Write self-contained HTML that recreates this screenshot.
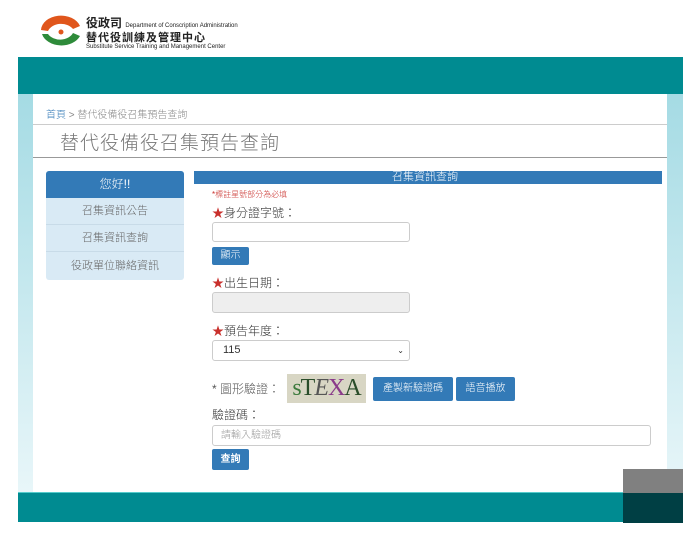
<!DOCTYPE html>
<html><head><meta charset="utf-8"><style>
*{margin:0;padding:0;box-sizing:border-box}
body{width:693px;height:534px;background:#fff;position:relative;overflow:hidden;font-family:"Liberation Sans","Noto Sans CJK TC",sans-serif;color:#333;font-weight:300}
.a{position:absolute}
.btn{position:absolute;background:#337ab7;color:#fff;border-radius:2px;font-size:10px;text-align:center}
.star{color:#c9302c}
</style></head><body>
<div class="a" style="left:38px;top:12px;width:46px;height:40px">
<svg width="46" height="40" viewBox="0 0 46 40"><path d="M3 18 A20 15 0 0 1 42 14 L35 17 A14 11 0 0 0 10 19 Z" fill="#e0561c"/><path d="M4 22 A20 15 0 0 0 42 24 L35 21 A14 11 0 0 1 10 22 Z" fill="#2e8b3a"/><circle cx="23" cy="20" r="6" fill="#fff"/><circle cx="23" cy="20" r="2.5" fill="#e0561c"/></svg></div>
<div class="a" style="left:86px;top:14px;font-size:12px;font-weight:bold;color:#222;white-space:nowrap">役政司 <span style="font-size:6px;font-weight:normal">Department of Conscription Administration</span></div>
<div class="a" style="left:86px;top:29px;font-size:11px;font-weight:bold;color:#222;letter-spacing:1px">替代役訓練及管理中心</div>
<div class="a" style="left:86px;top:44px;font-size:6px;color:#222">Substitute Service Training and Management Center</div>
<div class="a" style="left:18px;top:57px;width:665px;height:37px;background:#008b91"></div>
<div class="a" style="left:18px;top:94px;width:15px;height:398px;background:linear-gradient(#a5dbe4,#e8f6f9)"></div>
<div class="a" style="left:667px;top:94px;width:16px;height:398px;background:linear-gradient(#a5dbe4,#e8f6f9)"></div>
<div class="a" style="left:46px;top:106px;font-size:10px;color:#888"><span style="color:#337ab7">首頁</span> &gt; 替代役備役召集預告查詢</div>
<div class="a" style="left:33px;top:124px;width:634px;height:1px;background:#ccc"></div>
<div class="a" style="left:60px;top:128px;font-size:19px;color:#777;letter-spacing:1px;font-weight:200">替代役備役召集預告查詢</div>
<div class="a" style="left:33px;top:157px;width:634px;height:1px;background:#999"></div>
<div class="a" style="left:46px;top:171px;width:138px;height:109px;background:#d9eaf5;border-radius:3px"></div>
<div class="a" style="left:46px;top:171px;width:138px;height:27px;background:#337ab7;color:#fff;font-size:12px;text-align:center;line-height:27px;border-radius:3px 3px 0 0">您好!!</div>
<div class="a" style="left:46px;top:198px;width:138px;height:27px;color:#666;font-size:11px;text-align:center;line-height:27px;border-bottom:1px solid #c8dbe8">召集資訊公告</div>
<div class="a" style="left:46px;top:225px;width:138px;height:27px;color:#666;font-size:11px;text-align:center;line-height:27px;border-bottom:1px solid #c8dbe8">召集資訊查詢</div>
<div class="a" style="left:46px;top:252px;width:138px;height:28px;color:#666;font-size:11px;text-align:center;line-height:28px">役政單位聯絡資訊</div>
<div class="a" style="left:194px;top:171px;width:468px;height:13px;background:#337ab7;color:#fff;font-size:11px;line-height:13px;padding-left:198px;white-space:nowrap">召集資訊查詢</div>
<div class="a" style="left:212px;top:189px;font-size:8px;color:#c9302c">*標註星號部分為必填</div>
<div class="a" style="left:212px;top:204px;font-size:12px"><span class="star">★</span>身分證字號：</div>
<div class="a" style="left:212px;top:222px;width:198px;height:20px;border:1px solid #ccc;border-radius:3px"></div>
<div class="btn" style="left:212px;top:247px;width:37px;height:18px;line-height:18px">顯示</div>
<div class="a" style="left:212px;top:274px;font-size:12px"><span class="star">★</span>出生日期：</div>
<div class="a" style="left:212px;top:292px;width:198px;height:21px;border:1px solid #ccc;border-radius:3px;background:#eee"></div>
<div class="a" style="left:212px;top:322px;font-size:12px"><span class="star">★</span>預告年度：</div>
<div class="a" style="left:212px;top:340px;width:198px;height:21px;border:1px solid #ccc;border-radius:3px;font-size:11px;line-height:19px;padding-left:10px">115<span style="position:absolute;right:5px;font-size:8px">⌄</span></div>
<div class="a" style="left:212px;top:380px;font-size:12px;color:#555">* 圖形驗證：</div>
<div class="a" style="left:287px;top:374px;width:79px;height:29px;background:#d8d6c4;font-size:24px;font-family:'Liberation Serif',serif;color:#3c7a3c;line-height:29px;text-align:center;letter-spacing:-1px">s<span style="color:#2a4d2a">T</span><i style="color:#555">E</i><span style="color:#8a3b8a">X</span><span style="color:#2a4d2a">A</span></div>
<div class="btn" style="left:373px;top:377px;width:80px;height:24px;line-height:24px">產製新驗證碼</div>
<div class="btn" style="left:456px;top:377px;width:59px;height:24px;line-height:24px">語音播放</div>
<div class="a" style="left:212px;top:406px;font-size:12px">驗證碼：</div>
<div class="a" style="left:212px;top:425px;width:439px;height:21px;border:1px solid #ccc;border-radius:3px;font-size:10px;color:#999;line-height:19px;padding-left:8px">請輸入驗證碼</div>
<div class="btn" style="left:212px;top:449px;width:37px;height:21px;line-height:21px;font-weight:bold">查詢</div>
<div class="a" style="left:18px;top:492px;width:665px;height:30px;background:#008b91;border-top:1px solid #5cc"></div>
<div class="a" style="left:623px;top:469px;width:60px;height:24px;background:#808080"></div>
<div class="a" style="left:623px;top:493px;width:60px;height:30px;background:#003f44"></div>
</body></html>
